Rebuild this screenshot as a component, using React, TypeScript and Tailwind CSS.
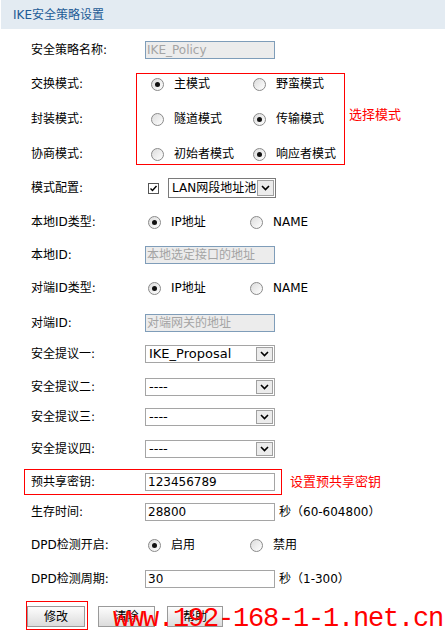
import React from 'react'

const FONT = { fontFamily: '"DejaVu Sans", "Noto Sans CJK SC", sans-serif' }

function Radio({ checked }: { checked?: boolean }) {
  return (
    <span className="w-[13px] h-[13px] rounded-full border border-[#8a8a8a] bg-gradient-to-br from-[#dcdcdc] to-white flex items-center justify-center shrink-0">
      {checked && <span className="w-[5px] h-[5px] rounded-full bg-[#111]" />}
    </span>
  )
}

function RadioPair({ a, b, sel }: { a: string; b: string; sel: 0 | 1 }) {
  return (
    <div className="flex items-center pl-[3px]">
      <div className="w-[102px] flex items-center gap-[10px]">
        <Radio checked={sel === 0} />
        <span>{a}</span>
      </div>
      <div className="flex items-center gap-[10px]">
        <Radio checked={sel === 1} />
        <span>{b}</span>
      </div>
    </div>
  )
}

function Arrow() {
  return (
    <span className="m-px w-[17px] border border-[#a0a0a0] bg-[#ececec] flex items-center justify-center">
      <svg width="9" height="6" viewBox="0 0 9 6">
        <path d="M1 1 L4.5 4.5 L8 1" fill="none" stroke="#000" strokeWidth="1.6" />
      </svg>
    </span>
  )
}

function Select({ value }: { value: string }) {
  return (
    <div className="w-[130px] h-[18px] border border-[#a5a5a5] bg-white flex">
      <span className="flex-1 pl-[3px] text-[13px] leading-[16px]">{value}</span>
      <Arrow />
    </div>
  )
}

function TextInput({ value, disabled }: { value: string; disabled?: boolean }) {
  return disabled ? (
    <div className="w-[130px] h-[18px] border border-[#7f9db9] bg-[#ececec] text-[#a4a4a4] text-[12px] leading-[16px] pl-px overflow-hidden whitespace-nowrap">
      {value}
    </div>
  ) : (
    <div className="w-[130px] h-[18px] border border-[#a5a5a5] bg-white text-[12px] leading-[16px] pl-[2px]">
      {value}
    </div>
  )
}

function Row({ label, mt, children }: { label: string; mt: string; children: React.ReactNode }) {
  return (
    <div className={`flex items-center h-[20px] ${mt}`}>
      <div className="w-[145px] pl-[31px] shrink-0">{label}</div>
      {children}
    </div>
  )
}

function Button({ text, className }: { text: string; className?: string }) {
  return (
    <div
      className={`h-[21px] border border-[#9a9a9a] bg-gradient-to-b from-[#fdfdfd] to-[#dcdcdc] flex items-center justify-center text-[12px] ${className ?? ''}`}
    >
      {text}
    </div>
  )
}

export default function App() {
  return (
    <div className="relative w-[445px] h-[633px] bg-white overflow-hidden text-[12px] text-black" style={FONT}>
      {/* Header */}
      <div className="ml-px h-[29px] bg-[#e3ebf2] flex items-center pl-[12px] text-[#1d5b96] text-[12px]">
        IKE安全策略设置
      </div>

      <Row label="安全策略名称:" mt="mt-[11px]">
        <TextInput value="IKE_Policy" disabled />
      </Row>

      {/* Mode group */}
      <div className="flex mt-[13px]">
        <div className="w-[136px] pl-[31px] pt-px shrink-0 flex flex-col gap-[15px]">
          <div className="h-[20px] flex items-center">交换模式:</div>
          <div className="h-[20px] flex items-center">封装模式:</div>
          <div className="h-[20px] flex items-center">协商模式:</div>
        </div>
        <div className="w-[209px] border border-[#f00] pl-[11px] flex flex-col gap-[15px]">
          <div className="h-[20px] flex items-center"><RadioPair a="主模式" b="野蛮模式" sel={0} /></div>
          <div className="h-[20px] flex items-center"><RadioPair a="隧道模式" b="传输模式" sel={1} /></div>
          <div className="h-[20px] flex items-center"><RadioPair a="初始者模式" b="响应者模式" sel={1} /></div>
        </div>
        <div className="ml-[4px] mt-[32px] text-[#f00] text-[13px]">选择模式</div>
      </div>

      <Row label="模式配置:" mt="mt-[13px]">
        <div className="flex items-center pl-[3px]">
          <span className="w-[11px] h-[11px] border border-[#555] bg-white flex items-center justify-center">
            <svg width="9" height="9" viewBox="0 0 9 9">
              <path d="M1.5 4.5 L3.5 6.5 L7.5 2" fill="none" stroke="#000" strokeWidth="1.4" />
            </svg>
          </span>
          <div className="ml-[9px] w-[108px] h-[20px] border border-[#7a7a7a] bg-white flex">
            <span className="flex-1 pl-[3px] text-[12px] leading-[18px] overflow-hidden whitespace-nowrap">LAN网段地址池</span>
            <Arrow />
          </div>
        </div>
      </Row>

      <Row label="本地ID类型:" mt="mt-[14px]">
        <RadioPair a="IP地址" b="NAME" sel={0} />
      </Row>

      <Row label="本地ID:" mt="mt-[13px]">
        <TextInput value="本地选定接口的地址" disabled />
      </Row>

      <Row label="对端ID类型:" mt="mt-[13px]">
        <RadioPair a="IP地址" b="NAME" sel={0} />
      </Row>

      <Row label="对端ID:" mt="mt-[15px]">
        <TextInput value="对端网关的地址" disabled />
      </Row>

      <Row label="安全提议一:" mt="mt-[11px]">
        <Select value="IKE_Proposal" />
      </Row>
      <Row label="安全提议二:" mt="mt-[13px]">
        <Select value="----" />
      </Row>
      <Row label="安全提议三:" mt="mt-[10px]">
        <Select value="----" />
      </Row>
      <Row label="安全提议四:" mt="mt-[12px]">
        <Select value="----" />
      </Row>

      {/* Pre-shared key */}
      <div className="flex items-center mt-[10px]">
        <div className="ml-[24px] w-[258px] h-[26px] border border-[#f00] flex items-center">
          <div className="w-[120px] pl-[6px] shrink-0">预共享密钥:</div>
          <TextInput value="123456789" />
        </div>
        <div className="ml-[8px] text-[#f00] text-[13px]">设置预共享密钥</div>
      </div>

      <Row label="生存时间:" mt="mt-[7px]">
        <TextInput value="28800" />
        <span className="ml-[4px]">秒（60-604800）</span>
      </Row>

      <Row label="DPD检测开启:" mt="mt-[13px]">
        <RadioPair a="启用" b="禁用" sel={0} />
      </Row>

      <Row label="DPD检测周期:" mt="mt-[14px]">
        <TextInput value="30" />
        <span className="ml-[4px]">秒（1-300）</span>
      </Row>

      {/* Buttons */}
      <div className="flex items-start mt-[12px]">
        <div className="ml-[26px] w-[62px] h-[29px] border border-[#f00] pt-[4px]">
          <Button text="修改" className="w-[58px]" />
        </div>
        <Button text="清除" className="ml-[10px] mt-[5px] w-[57px]" />
        <Button text="帮助" className="ml-[12px] mt-[5px] w-[56px]" />
      </div>

      {/* Watermark */}
      <div
        className="absolute left-[113px] top-[606px] text-[27px] leading-none tracking-[-1.2px] text-[#f00] whitespace-nowrap pointer-events-none"
        style={{ fontFamily: '"Liberation Mono", monospace' }}
      >
        www.192-168-1-1.net.cn
      </div>
    </div>
  )
}
